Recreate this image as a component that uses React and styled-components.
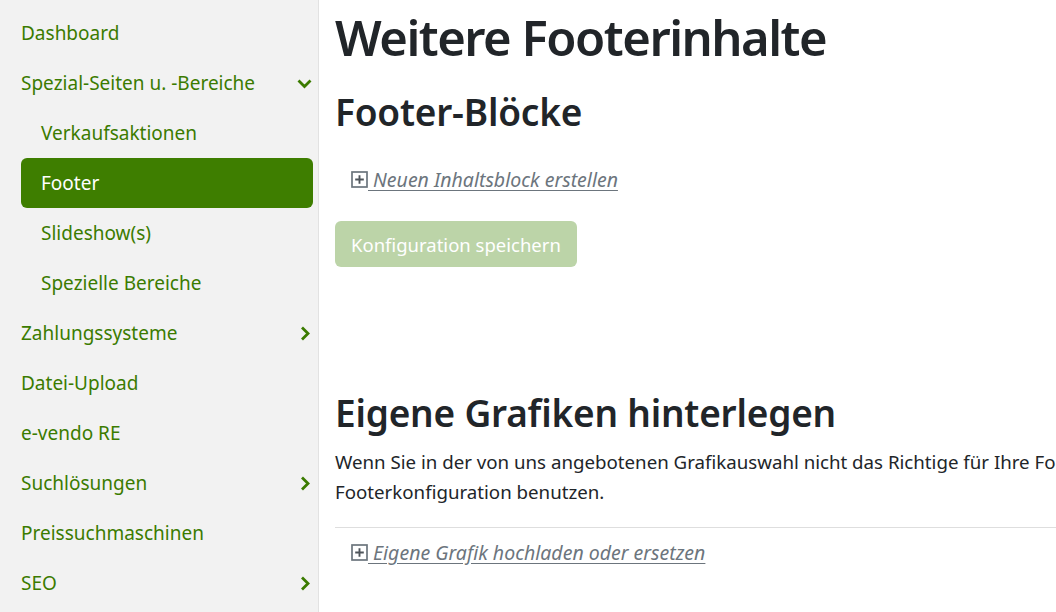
import React from "react";
import styled, { createGlobalStyle } from "styled-components";

const Global = createGlobalStyle`
  html, body { margin: 0; padding: 0; background: #fff; }
  body { font-family: "Noto Sans", "Open Sans", sans-serif; color: #212529; overflow: hidden; }
`;

const Layout = styled.div`
  display: flex;
  width: 1056px;
  height: 612px;
  overflow: hidden;
`;

const Sidebar = styled.nav`
  flex: 0 0 319px;
  background: #f2f2f2;
  border-right: 1px solid #e2e2e2;
  padding: 8px 5px 0 21px;
  box-sizing: border-box;
  display: flex;
  flex-direction: column;
`;

const NavItem = styled.a`
  display: flex;
  align-items: center;
  justify-content: space-between;
  height: 50px;
  flex: 0 0 50px;
  padding: 0 1px 0 ${(p) => (p.$sub ? "20px" : "0")};
  border-radius: 6px;
  font-size: 19px;
  color: ${(p) => (p.$active ? "#ffffff" : "#3b7b00")};
  background: ${(p) => (p.$active ? "#3e7e00" : "transparent")};
  text-decoration: none;
  box-sizing: border-box;
`;

const Chevron = ({ dir }) => (
  <svg width="15" height="15" viewBox="0 0 15 15" aria-hidden="true">
    {dir === "down" ? (
      <path d="M1.5 4.5 L7.5 10.5 L13.5 4.5" fill="none" stroke="#3b7b00" strokeWidth="2.8" />
    ) : (
      <path d="M5 1.5 L11 7.5 L5 13.5" fill="none" stroke="#3b7b00" strokeWidth="2.8" />
    )}
  </svg>
);

const Main = styled.main`
  flex: 1;
  padding: 0 0 0 16px;
  min-width: 0;
  white-space: nowrap;
`;

const H1 = styled.h1`
  margin: 6px 0 0;
  font-size: 49px;
  font-weight: 600;
  line-height: 62px;
  letter-spacing: -1.5px;
`;

const H2 = styled.h2`
  margin: ${(p) => p.$mt || "0"} 0 0;
  font-size: 37px;
  font-weight: 600;
  line-height: 46px;
  letter-spacing: -0.2px;
`;

const LinkRow = styled.div`
  display: flex;
  align-items: center;
  padding-left: 16px;
  height: 30px;
  margin-top: ${(p) => p.$mt || "0"};
`;

const ActionLink = styled.a`
  display: inline-flex;
  align-items: center;
  font-size: 19.5px;
  font-style: italic;
  color: #6c757d;
  text-decoration: underline;
  text-underline-offset: 3px;
  white-space: pre;
`;

const PlusIcon = () => (
  <svg width="17" height="17" viewBox="0 0 17 17" aria-hidden="true">
    <rect x="1" y="1" width="15" height="15" fill="none" stroke="#6c757d" strokeWidth="1.7" />
    <path d="M8.5 4.2 V12.8 M4.2 8.5 H12.8" stroke="#4f555b" strokeWidth="1.9" />
  </svg>
);

const Button = styled.button`
  display: block;
  margin-top: 27px;
  height: 46px;
  padding: 0 16px;
  border: none;
  border-radius: 6px;
  background: #bcd4a8;
  color: #ffffff;
  font-family: inherit;
  font-size: 18.5px;
`;

const Para = styled.p`
  margin: 11px 0 0;
  font-size: 18.7px;
  line-height: 30px;
`;

const Divider = styled.hr`
  margin: 20px 0 0;
  border: 0;
  border-top: 1px solid #dedede;
`;

const items = [
  { label: "Dashboard" },
  { label: "Spezial-Seiten u. -Bereiche", chevron: "down" },
  { label: "Verkaufsaktionen", sub: true },
  { label: "Footer", sub: true, active: true },
  { label: "Slideshow(s)", sub: true },
  { label: "Spezielle Bereiche", sub: true },
  { label: "Zahlungssysteme", chevron: "right" },
  { label: "Datei-Upload" },
  { label: "e-vendo RE" },
  { label: "Suchlösungen", chevron: "right" },
  { label: "Preissuchmaschinen" },
  { label: "SEO", chevron: "right" },
];

export default function App() {
  return (
    <>
      <Global />
      <Layout>
        <Sidebar>
          {items.map((it) => (
            <NavItem key={it.label} $sub={it.sub} $active={it.active}>
              <span>{it.label}</span>
              {it.chevron && <Chevron dir={it.chevron} />}
            </NavItem>
          ))}
        </Sidebar>
        <Main>
          <H1>Weitere Footerinhalte</H1>
          <H2 $mt="21px">Footer-Blöcke</H2>
          <LinkRow $mt="29px">
            <ActionLink>
              <PlusIcon />
              {" Neuen Inhaltsblock erstellen"}
            </ActionLink>
          </LinkRow>
          <Button disabled>Konfiguration speichern</Button>
          <H2 $mt="123px">Eigene Grafiken hinterlegen</H2>
          <Para>
            Wenn Sie in der von uns angebotenen Grafikauswahl nicht das Richtige für Ihre Footergestaltung finden, können Sie auch eigene Grafiken für die
            <br />
            Footerkonfiguration benutzen.
          </Para>
          <Divider />
          <LinkRow $mt="9px">
            <ActionLink>
              <PlusIcon />
              {" Eigene Grafik hochladen oder ersetzen"}
            </ActionLink>
          </LinkRow>
        </Main>
      </Layout>
    </>
  );
}
